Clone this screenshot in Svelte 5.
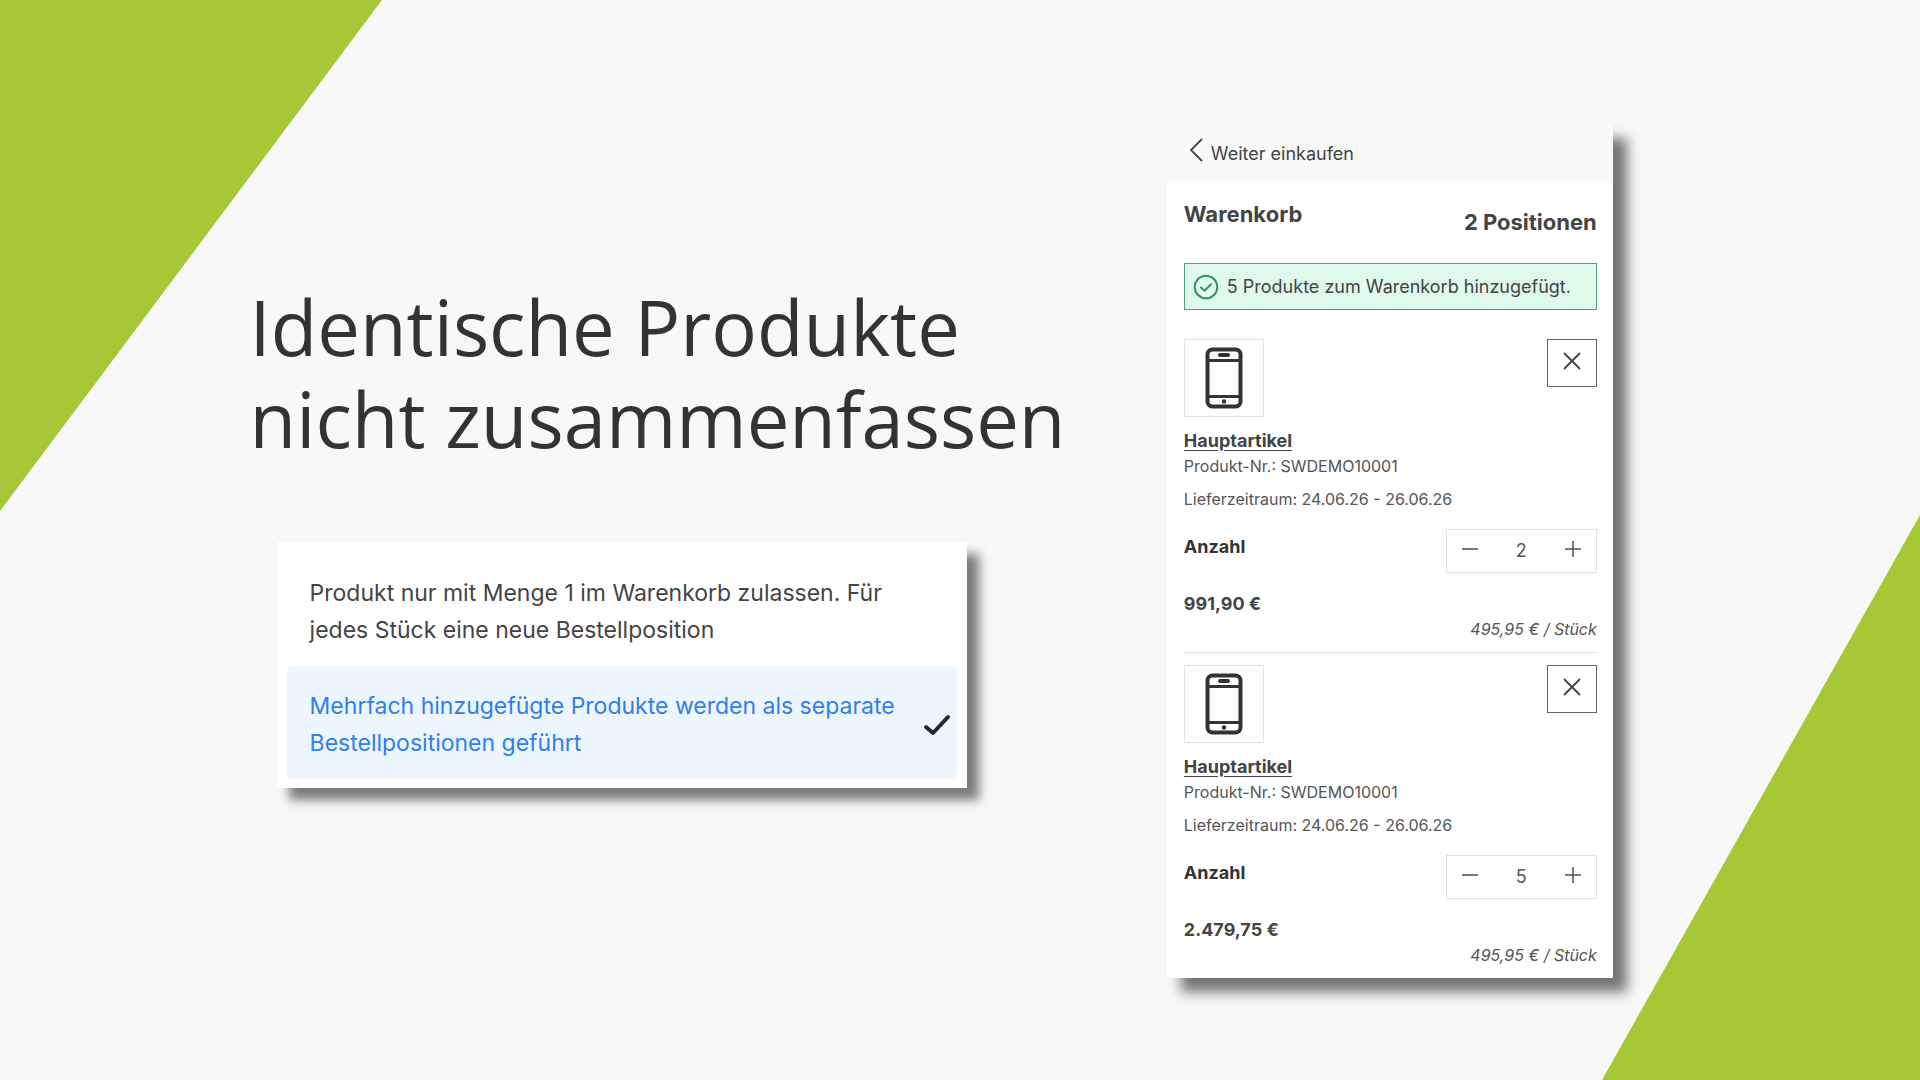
<script>
  let selectedOption = 1;

  const options = [
    'Produkt nur mit Menge 1 im Warenkorb zulassen. Für jedes Stück eine neue Bestellposition',
    'Mehrfach hinzugefügte Produkte werden als separate Bestellpositionen geführt'
  ];

  let items = [
    { id: 1, name: 'Hauptartikel', number: 'SWDEMO10001', delivery: '24.06.26 - 26.06.26', quantity: 2, unitPrice: 495.95 },
    { id: 2, name: 'Hauptartikel', number: 'SWDEMO10001', delivery: '24.06.26 - 26.06.26', quantity: 5, unitPrice: 495.95 }
  ];

  function formatPrice(value) {
    const [whole, cents] = value.toFixed(2).split('.');
    return whole.replace(/\B(?=(\d{3})+$)/g, '.') + ',' + cents + ' €';
  }

  function changeQuantity(item, step) {
    item.quantity = Math.max(1, Number(item.quantity) + step);
    items = items;
  }

  function removeItem(id) {
    items = items.filter((item) => item.id !== id);
  }
</script>

<main class="slide">
  <div class="corner corner-top"></div>
  <div class="corner corner-bottom"></div>

  <section class="intro">
    <h1>
      <span class="headline">Identische Produkte</span>
      <span class="headline">nicht zusammenfassen</span>
    </h1>
    <div class="options" role="listbox" aria-label="Warenkorb-Verhalten">
      {#each options as option, i}
        <button
          class="option"
          class:selected={selectedOption === i}
          role="option"
          aria-selected={selectedOption === i}
          on:click={() => (selectedOption = i)}
        >
          <span class="optionText">{option}</span>
          {#if selectedOption === i}
            <svg class="tick" viewBox="0 0 28 22" aria-hidden="true">
              <path d="M3 13 L10 19 L25 3" fill="none" stroke="#222a33" stroke-width="4" stroke-linecap="round" stroke-linejoin="round" />
            </svg>
          {/if}
        </button>
      {/each}
    </div>
  </section>

  <aside class="cart">
    <button class="back">
      <svg class="chevron" viewBox="0 0 14 24" aria-hidden="true">
        <path d="M12.500 1.500 L2 12 L12.500 22.500" fill="none" stroke="#444" stroke-width="1.800" stroke-linecap="round" />
      </svg>
      Weiter einkaufen
    </button>

    <div class="cartBody">
      <div class="cartTitle">
        <h2>Warenkorb</h2>
        <strong class="count">{items.length} Positionen</strong>
      </div>

      <div class="alert" role="alert">
        <svg class="alertIcon" viewBox="0 0 26 26" aria-hidden="true">
          <g fill="none" stroke="#3a8f6b" stroke-width="2" stroke-linecap="round" stroke-linejoin="round">
            <circle cx="13" cy="13" r="11.300" />
            <path d="M8 13.500 L11.500 16.800 L18 10.200" />
          </g>
        </svg>
        5 Produkte zum Warenkorb hinzugefügt.
      </div>

      {#each items as item (item.id)}
        <article class="item">
          <div class="itemTop">
            <div class="thumb">
              <svg viewBox="0 0 38 62" aria-hidden="true">
                <g fill="none" stroke="#333">
                  <rect x="2.500" y="2.500" width="33" height="57" rx="5" stroke-width="4" />
                  <path d="M3 13.500 H35 M3 49.500 H35" stroke-width="3" />
                  <path d="M15 8 H23" stroke-width="4" stroke-linecap="round" />
                </g>
                <circle cx="19" cy="54.500" r="2.200" fill="#333" />
              </svg>
            </div>
            <button class="remove" aria-label="Entfernen" on:click={() => removeItem(item.id)}>
              <svg viewBox="0 0 18 18" aria-hidden="true">
                <path d="M1.500 1.500 L16.500 16.500 M16.500 1.500 L1.500 16.500" stroke="#444" stroke-width="1.800" stroke-linecap="round" />
              </svg>
            </button>
          </div>
          <a class="name" href="#produkt">{item.name}</a>
          <p class="meta">Produkt-Nr.: {item.number}</p>
          <p class="meta delivery">Lieferzeitraum: {item.delivery}</p>
          <div class="quantityRow">
            <label for="quantity-{item.id}">Anzahl</label>
            <div class="stepper">
              <button aria-label="Weniger" on:click={() => changeQuantity(item, -1)}>
                <svg viewBox="0 0 16 16" aria-hidden="true">
                  <path d="M0 8 H16" stroke="#555" stroke-width="1.600" />
                </svg>
              </button>
              <input id="quantity-{item.id}" type="text" inputmode="numeric" bind:value={item.quantity}>
              <button aria-label="Mehr" on:click={() => changeQuantity(item, 1)}>
                <svg viewBox="0 0 16 16" aria-hidden="true">
                  <path d="M0 8 H16 M8 0 V16" stroke="#555" stroke-width="1.600" />
                </svg>
              </button>
            </div>
          </div>
          <strong class="total">{formatPrice(item.quantity * item.unitPrice)}</strong>
          <em class="unit">{formatPrice(item.unitPrice)} / Stück</em>
        </article>
      {/each}
    </div>
  </aside>
</main>

<style>
  :global(body) {
    background: #f8f8f8;
  }
  .slide {
    box-sizing: border-box;
    position: relative;
    min-height: 100vh;
    padding: 124px 16vw 80px 13vw;
    display: grid;
    grid-template-columns: minmax(0, 1fr) 446px;
    gap: 24px;
    align-items: start;
    background: #f8f8f8;
    color: #444;
    font-family: Inter, sans-serif;
    overflow: hidden;
  }
  h1, h2, p {
    margin: 0;
  }
  button, input {
    font: inherit;
    color: inherit;
  }
  button {
    cursor: pointer;
  }
  .corner {
    position: absolute;
    background: #a5c836;
  }
  .corner-top {
    top: 0;
    left: 0;
    width: 382px;
    height: 511px;
    clip-path: polygon(0 0, 100% 0, 0 100%);
  }
  .corner-bottom {
    right: 0;
    bottom: 0;
    width: 318px;
    height: 565px;
    clip-path: polygon(100% 0, 100% 100%, 0 100%);
  }
  .intro {
    position: relative;
    padding-top: 157px;
  }
  h1 {
    font-family: 'Open Sans', sans-serif;
    font-size: 76px;
    font-weight: 400;
    line-height: 92px;
    color: #333;
    white-space: nowrap;
  }
  .headline {
    display: block;
  }
  .options {
    box-sizing: border-box;
    max-width: 690px;
    margin: 77px 0 0 27px;
    padding: 11px 10px 9px;
    background: #fff;
    box-shadow: 12px 12px 10px #7b7b7b;
  }
  .option {
    display: flex;
    align-items: center;
    justify-content: space-between;
    width: 100%;
    padding: 22px 6px 17px 23px;
    border: none;
    border-radius: 6px;
    background: transparent;
    text-align: left;
    font-size: 23px;
    line-height: 37px;
  }
  .option.selected {
    background: #edf5ff;
    color: #2f80ed;
  }
  .optionText {
    max-width: 608px;
  }
  .tick {
    flex: none;
    width: 28px;
    height: 22px;
  }
  .cart {
    position: relative;
    background: #fff;
    box-shadow: 14px 14px 12px #757575;
  }
  .back {
    display: flex;
    align-items: center;
    gap: 8px;
    width: 100%;
    height: 59px;
    padding: 0 22px;
    border: none;
    background: #f9f9f9;
    font-size: 18px;
  }
  .chevron {
    width: 14px;
    height: 24px;
    margin-bottom: 8px;
  }
  .cartBody {
    padding: 16px 16px 11px 17px;
  }
  .cartTitle {
    display: flex;
    justify-content: space-between;
    font-size: 22px;
    line-height: 30px;
    font-weight: 700;
  }
  h2 {
    font-size: inherit;
  }
  .count {
    padding-top: 8px;
    font-weight: 700;
  }
  .alert {
    box-sizing: border-box;
    display: flex;
    align-items: center;
    gap: 8px;
    height: 47px;
    margin: 26px 0 29px;
    padding: 0 8px;
    border: 1px solid #4f9f7d;
    background: #dff9ed;
    font-size: 18px;
    white-space: nowrap;
  }
  .alertIcon {
    flex: none;
    width: 26px;
    height: 26px;
  }
  .item {
    display: flex;
    flex-direction: column;
    font-size: 18px;
    line-height: 24px;
  }
  .item + .item {
    margin-top: 11px;
    padding-top: 12px;
    border-top: 1px solid #e2e2e2;
  }
  .itemTop {
    display: flex;
    justify-content: space-between;
    align-items: flex-start;
  }
  .thumb {
    box-sizing: border-box;
    display: flex;
    align-items: center;
    justify-content: center;
    width: 80px;
    height: 78px;
    border: 1px solid #e2e2e2;
  }
  .thumb svg {
    width: 38px;
    height: 62px;
  }
  .remove {
    display: flex;
    justify-content: center;
    width: 50px;
    height: 48px;
    padding: 12px 0 0;
    border: 1px solid #666;
    background: #fff;
  }
  .remove svg {
    width: 18px;
    height: 18px;
  }
  .name {
    align-self: flex-start;
    margin-top: 12px;
    color: inherit;
    font-weight: 700;
    text-underline-offset: 3px;
  }
  .meta {
    margin-top: 1px;
    font-size: 16px;
    color: #555;
  }
  .delivery {
    margin-top: 9px;
  }
  .quantityRow {
    display: flex;
    justify-content: space-between;
    margin-top: 18px;
  }
  label {
    padding-top: 6px;
    font-weight: 700;
    color: #333;
  }
  .stepper {
    box-sizing: border-box;
    display: flex;
    width: 151px;
    height: 44px;
    border: 1px solid #e2e2e2;
  }
  .stepper button {
    display: flex;
    justify-content: center;
    width: 46px;
    padding: 11px 0 0;
    border: none;
    background: transparent;
  }
  .stepper svg {
    width: 16px;
    height: 16px;
  }
  .stepper input {
    flex: 1;
    min-width: 0;
    padding: 0;
    border: none;
    background: transparent;
    text-align: center;
    color: #555;
  }
  .total {
    margin-top: 19px;
    font-weight: 700;
  }
  .unit {
    align-self: flex-end;
    margin-top: 1px;
    font-size: 16px;
    color: #555;
  }
</style>
